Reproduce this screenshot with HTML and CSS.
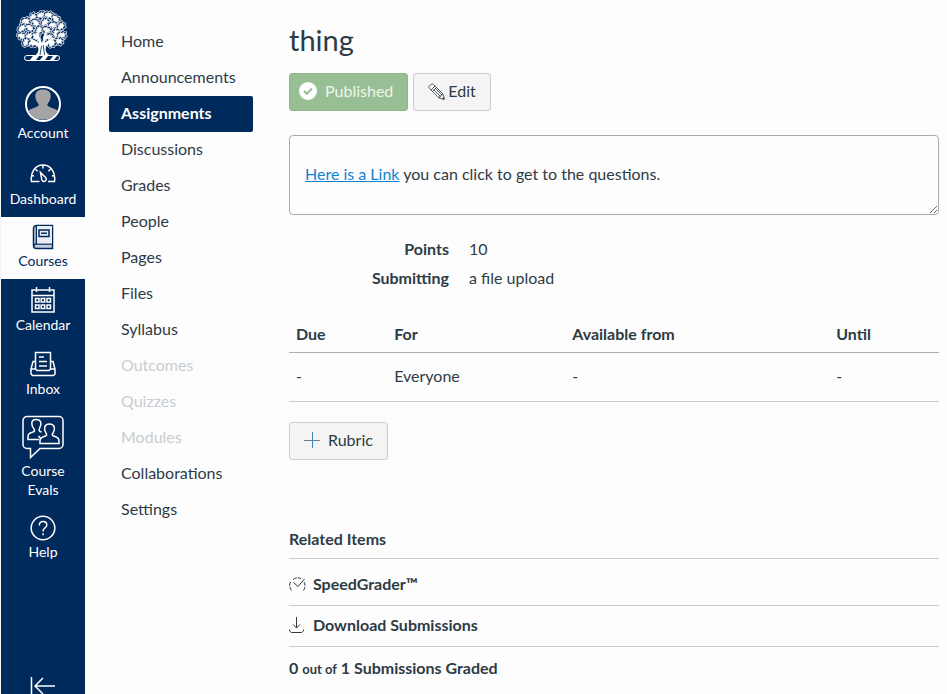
FILE: index.html
```html
<!DOCTYPE html>
<html lang="en">
<head>
<meta charset="utf-8">
<title>thing</title>
<meta name="viewport" content="width=device-width, initial-scale=1">
<link rel="stylesheet" href="styles.css">
</head>
<body>
<div class="app">
  <header class="rail">
    <a class="brand" href="#" aria-label="Home page">
      <svg width="52" height="52" viewBox="0 0 52 52">
        <defs>
          <g id="leaf">
            <path d="M-5.600 .8L-4-2.400-2-2.600-.8-4.800 1.200-4 3.400-4.600 3.600-2.200 5.600-.4 4.200 1.400 4.400 3.600 1.800 3.600-.4 5.200-2 3.600-4.400 3.800z" fill="#00295c" stroke="#dbe2ec" stroke-width=".8"/>
            <path d="M-4 1.500L-2-1.800-.6-1.400 .4-3.200 1.200-1.800 3-2.400 2.400-.2 3.600 .8 1.400 1.600 .6 3.200-.8 1.800-2.400 3z" fill="#fff" stroke="#fff" stroke-width=".5"/>
          </g>
        </defs>
        <use href="#leaf" transform="translate(25 5)"/>
        <use href="#leaf" transform="translate(17 7) rotate(-30)"/>
        <use href="#leaf" transform="translate(33 5) rotate(35)"/>
        <use href="#leaf" transform="translate(40 9) rotate(70)"/>
        <use href="#leaf" transform="translate(10 11) rotate(20)"/>
        <use href="#leaf" transform="translate(20 13) rotate(65)"/>
        <use href="#leaf" transform="translate(29 12) rotate(-20)"/>
        <use href="#leaf" transform="translate(37 15) rotate(20)"/>
        <use href="#leaf" transform="translate(45 16) rotate(-25)"/>
        <use href="#leaf" transform="translate(6 18) rotate(-20)"/>
        <use href="#leaf" transform="translate(14 18) rotate(60)"/>
        <use href="#leaf" transform="translate(23 20) rotate(-40)"/>
        <use href="#leaf" transform="translate(31 20) rotate(50)"/>
        <use href="#leaf" transform="translate(40 23) rotate(-60)"/>
        <use href="#leaf" transform="translate(46 25) rotate(20)"/>
        <use href="#leaf" transform="translate(6 26) rotate(40)"/>
        <use href="#leaf" transform="translate(13 26) rotate(-20)"/>
        <use href="#leaf" transform="translate(20 27) rotate(80)"/>
        <use href="#leaf" transform="translate(33 27) rotate(10)"/>
        <use href="#leaf" transform="translate(43 31) rotate(30)"/>
        <use href="#leaf" transform="translate(10 32) rotate(-40)"/>
        <use href="#leaf" transform="translate(17 33) rotate(20)"/>
        <use href="#leaf" transform="translate(36 33) rotate(-30)"/>
        <g fill="#fff">
          <path d="M18 46c4-2 5-5 4-9L14 30l2-1 7 4-3-10 2 0 4 10 3-11 2 .5-2 10 8-5 1 1-8 8c-1 4 0 7 5 9.500z"/>
          <path d="M24 45l1.500-9M28.500 45l-1.300-10" stroke="#00295c" stroke-width=".8"/>
        </g>
        <rect x="8.500" y="45.500" width="35" height="5" rx="2.500" fill="#00295c" stroke="#fff"/>
        <path d="M14 50l3-4h6l-3 4zM24 50l3-4h5l-3 4zM34 50l3-4h4l-3 4z" fill="#fff"/>
      </svg>
    </a>
    <nav class="global" aria-label="Global navigation">
      <a class="item account" href="#">
        <svg width="36" height="36" viewBox="0 0 36 36"><circle cx="18" cy="18" r="17" fill="#00295c" stroke="#fff" stroke-width="2"/><path d="M3.500 24.500c2.500-2 7-2.500 9.500-4.500 1-1 .8-2-.2-3C10.500 14 10 11 10.400 8.500 11 5 14 3.500 18 3.500s7 1.500 7.600 5c.4 2.500-.1 5.500-2.400 8.500-1 1-1.200 2-.2 3 2.500 2 7 2.500 9.500 4.500A16 16 0 0 1 3.500 24.500z" fill="#a5a5a5"/></svg>
        <span>Account</span>
      </a>
      <a class="item dashboard" href="#">
        <svg width="26" height="20" viewBox="0 0 26 20" class="line"><path d="M9.500 18.500H1.500C0 9 5.500 2 13 2s13 7 11.500 16.500H18M13 2v3.500M5.600 6.200l2 2M20.400 6.200l-2 2M1.500 12.500l2.500.5M24.500 12.500l-2.500.5"/><path d="M10.500 9.500l1.200 6.500a2.300 2.300 0 1 0 3.600-1.800z"/></svg>
        <span>Dashboard</span>
      </a>
      <a class="item active" href="#" aria-current="page">
        <svg width="26" height="26" viewBox="0 0 26 26" class="line"><path d="M22.500 20V1.500H6.500a3 3 0 0 0-3 3v17a3 3 0 0 0 3 3h16V20h-16a3 3 0 0 0-3 2M6.500 2v18" fill="#c5cfdb"/><path d="M7 2h15v17.500H7z" fill="#e9edf2" stroke="none"/><path d="M9 6h10v6.500H9zM11 9.200h6"/></svg>
        <span>Courses</span>
      </a>
      <a class="item" href="#">
        <svg width="26" height="26" viewBox="0 0 26 26" class="line"><path d="M2 3h22v22H2zM2 8.500h22M6.500 0v5M19.500 0v5M5.500 11.500h3.500V15H5.500zM11.200 11.500h3.500V15h-3.500zM17 11.500h3.500V15H17zM5.500 18h3.500v3.500H5.500zM11.200 18h3.500v3.500h-3.500zM17 18h3.500v3.500H17z"/></svg>
        <span>Calendar</span>
      </a>
      <a class="item" href="#">
        <svg width="26" height="26" viewBox="0 0 26 26" class="line"><path d="M5.500 18V1.500h15V18M5.500 10.500H3L1 18v5l1.500 1.500h21L25 23v-5l-2-7.500h-2.500M1 18h4.500l1.500 1.500h12l1.500-1.500H25M9 6h5M9 10.500h8M9 15h8"/></svg>
        <span>Inbox</span>
      </a>
      <a class="item" href="#">
        <svg width="42" height="44" viewBox="0 0 42 44" class="line"><path d="M5 1.500h32a4 4 0 0 1 4 4v24a4 4 0 0 1-4 4H18l-9.500 9v-9H5a4 4 0 0 1-4-4v-24a4 4 0 0 1 4-4z"/><path d="M17 24.500H6v-3c0-3 2-3.500 5-4.500 1.500-.5 2-1.500 1-3C9 10.500 8.500 4.500 14 4.500s6 4.500 3.500 9c-1 2 0 3 2 3.500"/><path d="M18 28.500h19v-3c0-3-2.500-3.500-5.500-4.500-1.500-.5-1.500-1.500-.5-3 2.500-4 2-9-3.500-9s-6 5-3.500 9c1 1.500.8 2.500-.5 3-3 1-5.500 1.500-5.500 4.500zM16.500 21l2.500 3"/></svg>
        <span>Course Evals</span>
      </a>
      <a class="item help" href="#">
        <svg width="26" height="26" viewBox="0 0 26 26" class="line"><circle cx="13" cy="13" r="11.800"/><path d="M9.300 10.500C9.300 7.800 10.800 6.500 13 6.500s3.800 1.400 3.800 3.500c0 3-3.800 3-3.800 6v.5M13 18.200v2"/></svg>
        <span>Help</span>
      </a>
    </nav>
    <button class="collapse" type="button" aria-label="Minimize global navigation">
      <svg width="26" height="18" viewBox="0 0 26 18" class="line"><path d="M1.500 0v18M25 9H5M13 1L5 9l8 8"/></svg>
    </button>
  </header>

  <nav class="course" aria-label="Course navigation">
    <a href="#">Home</a>
    <a href="#">Announcements</a>
    <a class="current" href="#" aria-current="page">Assignments</a>
    <a href="#">Discussions</a>
    <a href="#">Grades</a>
    <a href="#">People</a>
    <a href="#">Pages</a>
    <a href="#">Files</a>
    <a href="#">Syllabus</a>
    <a class="off" href="#">Outcomes</a>
    <a class="off" href="#">Quizzes</a>
    <a class="off" href="#">Modules</a>
    <a href="#">Collaborations</a>
    <a href="#">Settings</a>
  </nav>

  <main class="content">
    <h1>thing</h1>
    <div class="actions">
      <button class="btn published" type="button">
        <svg width="18" height="18" viewBox="0 0 18 18"><circle cx="9" cy="9" r="9" fill="#fff"/><path d="M5 9l2.800 2.800L13 6.500" fill="none" stroke="#98bf93" stroke-width="2"/></svg>
        Published
      </button>
      <button class="btn edit" type="button">
        <svg width="17" height="17" viewBox="0 0 17 17" fill="none" stroke="currentColor" stroke-width=".8"><path d="M1 3.500L3.500 1Q4.500.5 5.500 1.500L15 11l1.300 5.300L11 15 1.500 5.500Q.5 4.500 1 3.500zM3 7l4-4M4.500 8.500l4-4M5.500 6.500l7 7M7 5l7 7M11 15q0-2 2-2 0-2 2-2"/><path d="M14.500 16l1.500-1.500v1.500z"/></svg>
        Edit
      </button>
    </div>
    <div class="description">
      <p><a href="#">Here is a Link</a> you can click to get to the questions.</p>
    </div>
    <dl class="facts">
      <dt>Points</dt><dd>10</dd>
      <dt>Submitting</dt><dd>a file upload</dd>
    </dl>
    <table class="dates">
      <thead><tr><th class="due">Due</th><th class="for">For</th><th class="from">Available from</th><th>Until</th></tr></thead>
      <tbody><tr><td>-</td><td>Everyone</td><td>-</td><td>-</td></tr></tbody>
    </table>
    <button class="btn rubric" type="button">
      <svg width="16" height="16" viewBox="0 0 16 16" fill="none"><path d="M0 8.500h16" stroke="#6b7c8c"/><path d="M8.500 0v16" stroke="#3f86bd"/></svg>
      Rubric
    </button>
    <section class="related">
      <h2>Related Items</h2>
      <a href="#">
        <svg width="17" height="16" viewBox="0 0 17 16" fill="none" stroke="currentColor"><path d="M2.500 14.500A8 8 0 0 1 2 5M4 3.500A8 8 0 0 1 12 2.500M15 6a8 8 0 0 1-.5 8.500" stroke-dasharray="4 1"/><path d="M4.500 6.500l4.500 4 6.500-7.500"/></svg>
        SpeedGrader™
      </a>
      <a href="#">
        <svg width="17" height="17" viewBox="0 0 17 17" fill="none" stroke="currentColor"><path d="M7.500 0v11M4 7.500L7.500 11 11 7.500M.5 12.500v1.500l2 1.500h10l2-1.500v-1.500"/></svg>
        Download Submissions
      </a>
      <p>0 <small>out of</small> 1 Submissions Graded</p>
    </section>
  </main>
</div>
</body>
</html>
```
FILE: styles.css
```css
* {
  box-sizing: border-box;
}

body {
  margin: 0;
  background: #fdfdfe;
  color: #2d3b45;
  font: 16px/24px Lato, "Liberation Sans", sans-serif;
}

a {
  color: inherit;
  text-decoration: none;
}

svg {
  display: block;
  flex: none;
}

.app {
  display: flex;
  height: 100vh;
  overflow: hidden;
  border-left: 1px solid #f5f5f5;
}

.rail {
  display: flex;
  flex: none;
  flex-direction: column;
  width: 84px;
  background: #00295c;
  color: #fff;
}

.brand {
  display: flex;
  justify-content: center;
  padding: 10px 2px 16px 0;
}

.global {
  flex: 1;
}

.item {
  display: flex;
  flex-direction: column;
  align-items: center;
  gap: 2px;
  padding: 8px 12px 9px;
  font-size: 14px;
  line-height: 19px;
  text-align: center;
}

.item.account {
  gap: 1px;
}

.item.dashboard {
  gap: 6px;
  padding: 12px 4px 9px;
}

.item.active {
  gap: 1px;
  padding: 7px 12px 9px;
  background: #fdfdfe;
  color: #00295c;
}

.item.help {
  gap: 1px;
  padding-top: 7px;
}

.line {
  fill: none;
  stroke: currentColor;
  stroke-width: 1.5;
}

.collapse {
  display: flex;
  justify-content: center;
  margin: 0 0 -1px;
  padding: 0;
  border: 0;
  background: none;
  color: #fff;
}

.course {
  flex: none;
  width: 144px;
  margin: 24px 36px 0 24px;
}

.course a {
  display: block;
  padding: 5px 12px 7px;
}

.course .current {
  border-radius: 2px;
  background: #00295c;
  color: #fff;
  font-weight: 700;
}

.course .off {
  color: #c7cdd1;
}

.content {
  flex: 1;
  min-width: 0;
  padding: 22px 8px 0 0;
}

h1 {
  margin: 0 0 15px;
  font-size: 29px;
  font-weight: 400;
  line-height: 36px;
}

.actions {
  display: flex;
  gap: 5px;
}

.btn {
  display: flex;
  align-items: center;
  gap: 8px;
  height: 38px;
  padding: 0 14px 2px;
  border: 1px solid #c7cdd1;
  border-radius: 3px;
  background: #f4f4f4;
  color: #2d3b45;
  font: inherit;
}

.btn.published {
  padding-left: 9px;
  border-color: #8db888;
  background: #98bf93;
  color: #eef5ed;
}

.btn.edit {
  gap: 3px;
}

.description {
  margin: 24px 0 22px;
  padding: 14px 15px 16px;
  overflow: auto;
  border: 1px solid #aaa;
  border-radius: 4px;
  resize: vertical;
}

.description p {
  margin: 12px 0;
}

.description a {
  color: #0e84d1;
  text-decoration: underline;
}

.facts {
  display: grid;
  grid-template-columns: 160px 1fr;
  gap: 5px 20px;
  margin: 0 0 25px;
}

.facts dt {
  font-weight: 700;
  text-align: right;
}

.facts dd {
  margin: 0;
}

.dates {
  width: 100%;
  margin-bottom: 20px;
  border-collapse: collapse;
  table-layout: fixed;
  text-align: left;
}

.dates th,
.dates td {
  padding: 7px;
  border-bottom: 1px solid #c7cdd1;
}

.dates th {
  padding-bottom: 6px;
  border-color: #a5afb5;
}

.dates td {
  padding: 11px 7px 13px;
}

.due {
  width: 15.1%;
}

.for {
  width: 27.4%;
}

.from {
  width: 40.6%;
}

.related {
  margin-top: 67px;
  font-weight: 700;
}

.related h2 {
  margin: 0;
  padding-bottom: 7px;
  border-bottom: 1px solid #c7cdd1;
  font-size: 16px;
}

.related a {
  display: flex;
  align-items: center;
  gap: 7px;
  padding: 7px 0 9px;
  border-bottom: 1px solid #c7cdd1;
}

.related h2 + a {
  padding: 13px 0 9px;
}

.related p {
  margin: 9px 0 0;
}

.related small {
  font-size: 13px;
}
```
